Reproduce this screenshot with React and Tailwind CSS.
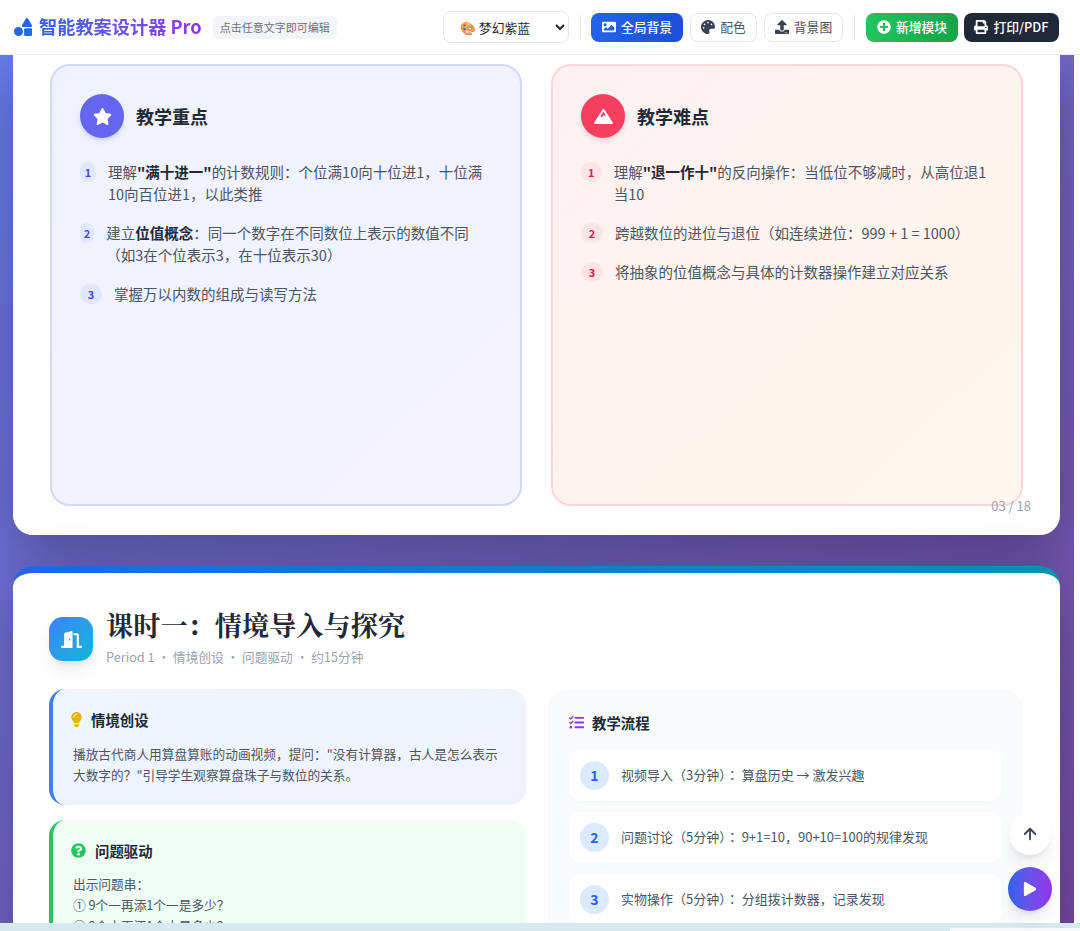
import React from "react";
import { FaShapes, FaStar, FaMountain, FaImage, FaPalette, FaUpload, FaPlusCircle, FaPrint, FaDoorOpen, FaLightbulb, FaQuestionCircle, FaTasks, FaPlay } from "react-icons/fa";
import { ArrowUp } from "lucide-react";

function Item({ n, tone, children }) {
  return (
    <li className="flex gap-3 text-[14.5px] leading-[22px] text-[#4b5563]">
      <span className={`w-[22px] h-[20px] mt-[1px] rounded-full flex items-center justify-center text-[11px] font-bold ${tone}`}>{n}</span>
      <span>{children}</span>
    </li>
  );
}

function Panel({ title, icon, circle, panel, tone, items }) {
  return (
    <div className={`flex-1 min-w-0 h-[442px] rounded-[20px] border-2 px-[28px] pt-[28px] ${panel}`}>
      <div className="flex items-center gap-3 mb-[23px]">
        <div className={`w-[44px] h-[44px] rounded-full flex items-center justify-center text-white text-[19px] shadow-md ${circle}`}>{icon}</div>
        <h3 className="text-[18px] font-bold text-[#1f2937]">{title}</h3>
      </div>
      <ul className="flex flex-col gap-[17px]">
        {items.map((c, i) => <Item key={i} n={i + 1} tone={tone}>{c}</Item>)}
      </ul>
    </div>
  );
}

function Btn({ className, icon, children }) {
  return (
    <button className={`h-[29px] rounded-[8px] flex items-center justify-center gap-[5px] text-[12.8px] ${className}`}>
      {icon}{children}
    </button>
  );
}

function Step({ n, head, children }) {
  return (
    <div className="h-[51px] rounded-[12px] bg-white flex items-center gap-3 px-[11px] text-[13px] text-[#4b5563] shadow-[0_1px_2px_rgba(0,0,0,0.02)]">
      <span className="w-[29px] h-[29px] rounded-full bg-[#dbeafe] text-[#2563eb] font-bold text-[14px] flex items-center justify-center">{n}</span>
      <span className="whitespace-pre">{head}<span lang="zh-Hant" className="font-['Noto_Sans_CJK_TC',sans-serif]">：</span> {children}</span>
    </div>
  );
}

export default function App() {
  return (
    <div className="relative w-[1080px] h-[931px] overflow-hidden flex flex-col bg-white font-['Noto_Sans_CJK_SC',sans-serif]">
      <header className="h-[55px] shrink-0 bg-white border-b border-[#e9ebee] flex items-center pl-[14px] pr-[21px] z-10">
        <FaShapes className="text-[#2563eb] text-[18px]" />
        <h1 className="ml-[7px] text-[18.2px] font-bold bg-gradient-to-r from-[#2563eb] to-[#9333ea] bg-clip-text text-transparent">智能教案设计器 Pro</h1>
        <span className="ml-[11px] h-[23px] w-[124px] rounded-[6px] bg-[#f3f4f6] text-[11px] text-[#6b7280] flex items-center justify-center">点击任意文字即可编辑</span>
        <select defaultValue="a" className="ml-auto w-[126px] h-[32px] rounded-[8px] border border-[#e5e7eb] bg-white pl-[12px] text-[12.8px] text-[#1f2937]">
          <option value="a">🎨 梦幻紫蓝</option>
        </select>
        <span className="ml-[11px] mr-[10px] w-px h-[25px] bg-[#e5e7eb]" />
        <Btn className="w-[92px] font-medium bg-gradient-to-r from-[#2563eb] to-[#1d4ed8] text-white" icon={<FaImage className="text-[14px]" />}>全局背景</Btn>
        <Btn className="ml-[7px] w-[67px] bg-white border border-[#e5e7eb] text-[#4b5563]" icon={<FaPalette className="text-[14px] text-[#374151]" />}>配色</Btn>
        <Btn className="ml-[7px] w-[79px] bg-white border border-[#e5e7eb] text-[#4b5563]" icon={<FaUpload className="text-[14px] text-[#374151]" />}>背景图</Btn>
        <span className="mx-[11px] w-px h-[25px] bg-[#e5e7eb]" />
        <Btn className="w-[92px] font-medium bg-gradient-to-r from-[#22c55e] to-[#16a34a] text-white" icon={<FaPlusCircle className="text-[14px]" />}>新增模块</Btn>
        <Btn className="ml-[6px] w-[95px] font-medium bg-[#1f2937] text-white" icon={<FaPrint className="text-[14px]" />}>打印/PDF</Btn>
      </header>

      <div className="flex-1 min-h-0 flex">
        <main className="flex-1 min-w-0 overflow-hidden pl-[13px] pr-[14px] bg-gradient-to-br from-[#667eea] to-[#764ba2]">
          <section className="relative h-[480px] bg-white rounded-b-[20px] px-[37px] pt-[9px] flex gap-[29px] shadow-[0_20px_60px_rgba(0,0,0,0.3)]">
            <Panel
              title="教学重点"
              icon={<FaStar />}
              circle="bg-[#6366f1]"
              panel="border-[#d0d9fb] bg-gradient-to-br from-[#eef2ff] to-[#f5f3ff]"
              tone="bg-[#e0e7ff] text-[#4f46e5]"
              items={[
                <>理解<b className="text-[#1f2937]">"满十进一"</b>的计数规则：个位满10向十位进1，十位满10向百位进1，以此类推</>,
                <>建立<b className="text-[#1f2937]">位值概念</b>：同一个数字在不同数位上表示的数值不同（如3在个位表示3，在十位表示30）</>,
                <>掌握万以内数的组成与读写方法</>,
              ]}
            />
            <Panel
              title="教学难点"
              icon={<FaMountain />}
              circle="bg-[#f43f5e]"
              panel="border-[#fdd5da] bg-gradient-to-br from-[#fff1f2] to-[#fff7ed]"
              tone="bg-[#ffe4e6] text-[#e11d48]"
              items={[
                <>理解<b className="text-[#1f2937]">"退一作十"</b>的反向操作：当低位不够减时，从高位退1当10</>,
                <>跨越数位的进位与退位（如连续进位：999 + 1 = 1000）</>,
                <>将抽象的位值概念与具体的计数器操作建立对应关系</>,
              ]}
            />
            <span className="absolute right-[29px] top-[441px] text-[13px] text-[#9ca3af]">03 / 18</span>
          </section>

          <section className="relative mt-[31px] rounded-t-[20px] border-t-[7px] border-t-transparent [background:linear-gradient(white,white)_padding-box,linear-gradient(90deg,#2563eb,#0891b2)_border-box] pl-[36px] pr-[37px] pt-[35px] shadow-[0_20px_60px_rgba(0,0,0,0.3)] h-[400px]">
            <div className="flex items-start gap-[13px]">
              <div className="mt-[9px] w-[44px] h-[44px] rounded-[14px] bg-gradient-to-br from-[#3b82f6] to-[#06b6d4] flex items-center justify-center text-white text-[21px] shadow-lg"><FaDoorOpen /></div>
              <div>
                <h2 className="text-[27.2px] leading-[34px] font-bold text-[#1f2937] font-['Noto_Serif_CJK_SC','Liberation_Serif',serif]">课时一：情境导入与探究</h2>
                <p className="mt-[6px] text-[12.7px] leading-[18px] text-[#9ca3af]">Period 1 · 情境创设 · 问题驱动 · 约15分钟</p>
              </div>
            </div>
            <div className="mt-[23px] flex gap-[22px]">
              <div className="w-[477px] shrink-0 flex flex-col gap-[15px]">
                <div className="h-[116px] rounded-[16px] border-l-4 border-[#3b82f6] bg-gradient-to-br from-[#eff6ff] to-[#eef2ff] pl-[20px] pr-[20px] pt-[20px]">
                  <div className="-ml-[2px] flex items-center gap-[9px] text-[14.4px] font-bold text-[#1f2937]"><FaLightbulb className="w-[11px] h-[15px] text-[#eab308]" />情境创设</div>
                  <p className="mt-[12px] text-[12.7px] leading-[21px] text-[#4b5563]">播放古代商人用算盘算账的动画视频，提问："没有计算器，古人是怎么表示大数字的？"引导学生观察算盘珠子与数位的关系。</p>
                </div>
                <div className="h-[160px] rounded-[16px] border-l-4 border-[#22c55e] bg-[#f0fdf4] pl-[20px] pr-[20px] pt-[20px]">
                  <div className="-ml-[2px] flex items-center gap-[9px] text-[14.4px] font-bold text-[#1f2937]"><FaQuestionCircle className="text-[#22c55e] text-[15px]" />问题驱动</div>
                  <p className="mt-[11px] text-[12.7px] leading-[21px] text-[#4b5563]">出示问题串：<br />① 9个一再添1个一是多少？<br />② 9个十再添1个十是多少？</p>
                </div>
              </div>
              <div className="flex-1 min-w-0 rounded-[20px] bg-[#fafbfd] px-[21px] pt-[23px] pb-[20px] self-start">
                <div className="flex items-center gap-[8px] text-[14.4px] font-bold text-[#1f2937]"><FaTasks className="text-[#9333ea] text-[15px]" />教学流程</div>
                <div className="mt-[16px] flex flex-col gap-[11px]">
                  <Step n={1} head="视频导入（3分钟）">算盘历史 → 激发兴趣</Step>
                  <Step n={2} head="问题讨论（5分钟）">9+1=10，90+10=100的规律发现</Step>
                  <Step n={3} head="实物操作（5分钟）">分组拨计数器，记录发现</Step>
                </div>
              </div>
            </div>
          </section>
        </main>
        <div className="w-[6px] shrink-0 bg-white" />
      </div>
      <div className="h-[8px] shrink-0 bg-[#d5e9ee] relative z-10">
        <div className="absolute right-0 bottom-0 w-[130px] h-[3px] bg-[#f4f9fa]" />
      </div>

      <button className="absolute left-[1009px] top-[813px] w-[42px] h-[42px] rounded-full bg-white text-[#374151] flex items-center justify-center shadow-lg z-20"><ArrowUp size={18} strokeWidth={2.4} /></button>
      <button className="absolute left-[1008px] top-[867px] w-[44px] h-[44px] rounded-full bg-gradient-to-r from-[#2563eb] to-[#9333ea] text-white flex items-center justify-center text-[14px] shadow-lg z-20"><FaPlay /></button>
    </div>
  );
}
